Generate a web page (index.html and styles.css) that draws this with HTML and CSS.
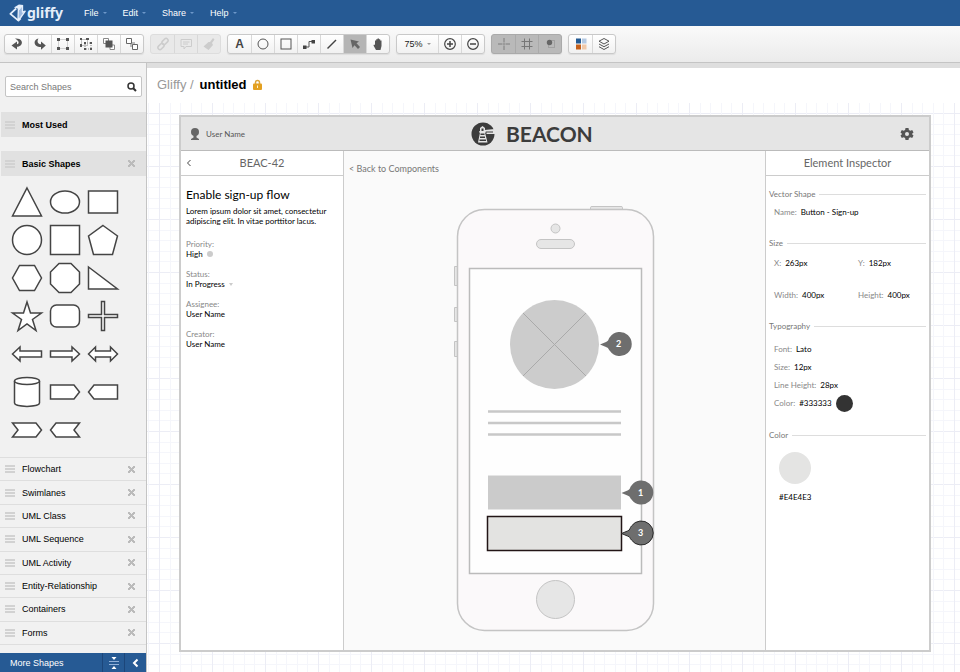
FILE: index.html
```html
<!DOCTYPE html>
<html lang="en">
<head>
    <meta charset="UTF-8">
    <meta name="viewport" content="width=device-width, initial-scale=1.0">
    <title>Gliffy / untitled</title>
    <link rel="stylesheet" href="styles.css">
</head>
<body>
    <header class="topbar">
        <a class="logo" href="#">
            <svg width="20" height="22" viewBox="0 0 20 22" fill="none" stroke="#e4eefa" stroke-width="2" stroke-linejoin="round">
                <path d="M8 6L1.5 12L10.5 19.500L13 17"/>
                <path d="M10 19L10.500 5L15 3V10L18 9L13 16Z" fill="#9dbbe0" stroke-width="1.5"/>
                <path d="M5.500 5L11 1.5L16 2L11.500 8L9.500 6Z" fill="#e4eefa" stroke="none"/>
            </svg>
            <span>gliffy</span>
        </a>
        <nav class="menu">
            <button type="button">File</button>
            <button type="button">Edit</button>
            <button type="button">Share</button>
            <button type="button">Help</button>
        </nav>
    </header>

    <div class="toolbar">
        <div class="group">
            <button type="button" aria-label="Undo"><svg viewBox="0 0 14 14"><path d="M5 1.500C11 1 13.500 5 11 8C10 9.200 8.500 9.800 7 9.800V12.500L1.500 8.500L7 4.500V7.200C9.500 7 9.500 4 5 1.500Z" fill="#555"/></svg></button>
            <button type="button" aria-label="Redo"><svg viewBox="0 0 14 14"><path d="M5.500 1.500C.5 2.500 .5 8 4.500 9.500C5.500 9.900 7 10 8 10V12.800L12.800 8.500L8 4.500V7.300C5 7.200 3.500 4.500 5.500 1.500Z" fill="#555"/></svg></button>
            <button type="button" aria-label="Group"><svg viewBox="0 0 14 14"><rect x="2.500" y="2.500" width="9" height="9" fill="none" stroke="#aaa" stroke-dasharray="1 1"/><path d="M1 1h3v3H1zM10 1h3v3h-3zM1 10h3v3H1zM10 10h3v3h-3z" fill="#555"/></svg></button>
            <button type="button" aria-label="Ungroup"><svg viewBox="0 0 14 14"><path d="M2.500 2.500h6v6h-6zM6 6h6v6H6z" fill="none" stroke="#888" stroke-dasharray="1 1"/><path d="M1 1h2v2H1zM7 1h3v2H7zM1 7h2v3H1zM11 5h2v2h-2zM5 11h2v2H5zM11 11h2v2h-2zM5 5h2v2H5z" fill="#555"/></svg></button>
            <button type="button" aria-label="Bring to front"><svg viewBox="0 0 14 14"><path d="M1.500 1.500h5v5h-5zM8 8h4.500v4.500H8z" fill="#fff" stroke="#888"/><path d="M3.500 3.500h7v7h-7z" fill="#555"/></svg></button>
            <button type="button" aria-label="Send to back"><svg viewBox="0 0 14 14"><path d="M5 5h5v5H5z" fill="#bbb"/><path d="M1.500 1.500h5v5h-5zM7.500 7.500h5v5h-5z" fill="#fff" stroke="#666"/></svg></button>
        </div>
        <div class="group disabled">
            <button type="button" aria-label="Link" disabled><svg viewBox="0 0 14 14" fill="none" stroke="#ccc" stroke-width="1.5"><rect x="5.500" y="2.500" width="7" height="4" rx="2" transform="rotate(-45 9 4.500)"/><rect x="1.500" y="7.500" width="7" height="4" rx="2" transform="rotate(-45 5 9.500)"/></svg></button>
            <button type="button" aria-label="Comment" disabled><svg viewBox="0 0 14 14" fill="none" stroke="#ccc"><path d="M2 2.500h10.500v7H7L5 12V9.500H2zM4 5h6.500M4 7h5"/></svg></button>
            <button type="button" aria-label="Format painter" disabled><svg viewBox="0 0 14 14"><path d="M11 1L12.500 2.500L10 6L11 8L6.500 13L1.500 9.500L6.500 5L8 5Z" fill="#ccc"/></svg></button>
        </div>
        <div class="group">
            <button type="button" class="letter">A</button>
            <button type="button" aria-label="Ellipse"><svg viewBox="0 0 14 14"><circle cx="7" cy="7" r="5" fill="none" stroke="#555"/></svg></button>
            <button type="button" aria-label="Rectangle"><svg viewBox="0 0 14 14"><rect x="2" y="2" width="10" height="10" fill="none" stroke="#555"/></svg></button>
            <button type="button" aria-label="Connector"><svg viewBox="0 0 14 14"><path d="M3 10H7V4.500H11" fill="none" stroke="#555"/><path d="M1 8.500h3.500v3.500H1zM9.500 3H13v3.500H9.500z" fill="#444"/></svg></button>
            <button type="button" aria-label="Line"><svg viewBox="0 0 14 14"><path d="M2.500 11.500L11 3" stroke="#444" stroke-width="1.5"/></svg></button>
            <button type="button" class="pressed" aria-label="Pointer"><svg viewBox="0 0 14 14"><path d="M2.500 2.500L11 4.500L8.500 6.300L12 10L10 12L6.500 8.300L4.500 11Z" fill="#666"/></svg></button>
            <button type="button" aria-label="Pan"><svg viewBox="0 0 14 14"><path d="M5 13L2.500 8.500L3 7.500L4 8V3.500H5.200V2.200H6.500V1.500H8V2.200H9.200V3.500H10.500V9L9.500 13Z" fill="#555"/></svg></button>
        </div>
        <div class="group">
            <button type="button" class="zoom">75%</button>
            <button type="button" aria-label="Zoom in"><svg viewBox="0 0 14 14"><path d="M4 7h6M7 4v6" stroke="#444" stroke-width="1.5"/><circle cx="7" cy="7" r="5.300" fill="none" stroke="#444" stroke-width="1.2"/></svg></button>
            <button type="button" aria-label="Zoom out"><svg viewBox="0 0 14 14"><path d="M4 7h6" stroke="#444" stroke-width="1.5"/><circle cx="7" cy="7" r="5.300" fill="none" stroke="#444" stroke-width="1.2"/></svg></button>
        </div>
        <div class="group toggled">
            <button type="button" aria-label="Guides"><svg viewBox="0 0 14 14"><path d="M1 7h4.500M8.500 7H13M7 1v4.500M7 8.500V13M6 7h2" stroke="#7c7c7c"/></svg></button>
            <button type="button" aria-label="Grid"><svg viewBox="0 0 14 14"><path d="M4.500 1.500v11M9.500 1.500v11M1.500 4.500h11M1.500 9.500h11" stroke="#777"/></svg></button>
            <button type="button" aria-label="Snap to grid"><svg viewBox="0 0 14 14"><rect x="5.500" y="3.500" width="6" height="7" fill="none" stroke="#888" stroke-dasharray="1 1"/><circle cx="6.500" cy="5.500" r="2.700" fill="#666"/></svg></button>
        </div>
        <div class="group">
            <button type="button" aria-label="Themes"><svg viewBox="0 0 14 14"><path d="M2 1.500h5v5H2z" fill="#235a93"/><path d="M8 1.500h4.500v5H8z" fill="#b4c9e2"/><path d="M2 7.500h5v5H2z" fill="#c5601b"/><path d="M8 7.500h4.500v5H8z" fill="#f0c8a8"/></svg></button>
            <button type="button" aria-label="Layers"><svg viewBox="0 0 14 14" fill="none" stroke="#555"><path d="M7 1.500L12 4.200L7 7L2 4.200ZM2 7L7 9.700L12 7M2 9.700L7 12.500L12 9.700"/></svg></button>
        </div>
    </div>

    <div class="workspace">
        <aside class="sidebar">
            <form class="search">
                <input type="text" aria-label="Search Shapes" placeholder="Search Shapes">
                <button type="submit" aria-label="Search"><svg width="10" height="10" viewBox="0 0 10 10" fill="none" stroke="#333"><circle cx="4" cy="4" r="3" stroke-width="1.5"/><path d="M6.200 6.200L9 9" stroke-width="2"/></svg></button>
            </form>
            <h2 class="section"><i class="grip"></i>Most Used</h2>
            <h2 class="section basic"><i class="grip"></i>Basic Shapes<button type="button" class="close" aria-label="Remove"></button></h2>
            <div class="shapes">
                <svg viewBox="0 0 38 38"><path d="M19 5L33.500 33H4.500Z"/></svg>
                <svg viewBox="0 0 38 38"><ellipse cx="19" cy="19" rx="14.500" ry="11"/></svg>
                <svg viewBox="0 0 38 38"><path d="M4.500 8h29v22h-29z"/></svg>
                <svg viewBox="0 0 38 38"><circle cx="19" cy="19" r="14.500"/></svg>
                <svg viewBox="0 0 38 38"><path d="M4.500 4.500h29v29h-29z"/></svg>
                <svg viewBox="0 0 38 38"><path d="M19 4.500L33.500 15L28.500 33.500H9.500L4.500 15Z"/></svg>
                <svg viewBox="0 0 38 38"><path d="M11.500 6.500h15L33.500 19L26.500 31.500H11.500L4.500 19Z"/></svg>
                <svg viewBox="0 0 38 38"><path d="M13 4.500h12L33.500 13V25L25 33.500H13L4.500 25V13Z"/></svg>
                <svg viewBox="0 0 38 38"><path d="M4.500 8L33.500 30H4.500Z"/></svg>
                <svg viewBox="0 0 38 38"><path d="M19 5L22.500 16H33.500L24.500 22.500L28 33.500L19 27L10 33.500L13.500 22.500L4.500 16H15.500Z"/></svg>
                <svg viewBox="0 0 38 38"><rect x="4.500" y="8" width="29" height="22" rx="6"/></svg>
                <svg viewBox="0 0 38 38"><path d="M17.500 4.500h3v13h13v3h-13v13h-3v-13h-13v-3h13z"/></svg>
                <svg viewBox="0 0 38 38"><path d="M4.500 19L12 12V16H33.500V22H12V26Z"/></svg>
                <svg viewBox="0 0 38 38"><path d="M33.500 19L26 12V16H4.500V22H26V26Z"/></svg>
                <svg viewBox="0 0 38 38"><path d="M4.500 19L11.500 12V16H26.500V12L33.500 19L26.500 26V22H11.500V26Z"/></svg>
                <svg viewBox="0 0 38 38"><path d="M6.500 8V30C6.500 34.500 31.500 34.500 31.500 30V8"/><ellipse cx="19" cy="8" rx="12.500" ry="3.500"/></svg>
                <svg viewBox="0 0 38 38"><path d="M4.500 12H28L33.500 19L28 26H4.500Z"/></svg>
                <svg viewBox="0 0 38 38"><path d="M33.500 12H10L4.500 19L10 26H33.500Z"/></svg>
                <svg viewBox="0 0 38 38"><path d="M4.500 12H28L33.500 19L28 26H4.500L10 19Z"/></svg>
                <svg viewBox="0 0 38 38"><path d="M33.500 12H10L4.500 19L10 26H33.500L28 19Z"/></svg>
            </div>
            <ul class="libraries">
                <li><i class="grip"></i>Flowchart<button type="button" class="close" aria-label="Remove"></button></li>
                <li><i class="grip"></i>Swimlanes<button type="button" class="close" aria-label="Remove"></button></li>
                <li><i class="grip"></i>UML Class<button type="button" class="close" aria-label="Remove"></button></li>
                <li><i class="grip"></i>UML Sequence<button type="button" class="close" aria-label="Remove"></button></li>
                <li><i class="grip"></i>UML Activity<button type="button" class="close" aria-label="Remove"></button></li>
                <li><i class="grip"></i>Entity-Relationship<button type="button" class="close" aria-label="Remove"></button></li>
                <li><i class="grip"></i>Containers<button type="button" class="close" aria-label="Remove"></button></li>
                <li><i class="grip"></i>Forms<button type="button" class="close" aria-label="Remove"></button></li>
            </ul>
            <footer class="more">
                <button type="button" class="more-label">More Shapes</button>
                <button type="button" class="more-icon" aria-label="Collapse sections"><svg width="12" height="14" viewBox="0 0 12 14"><path d="M1 5.500h10M1 8.500h10" stroke="#8fb0d8"/><path d="M3.500 1h5L6 4zM3.500 13h5L6 10z" fill="#fff"/></svg></button>
                <button type="button" class="more-icon" aria-label="Hide panel"><svg width="8" height="10" viewBox="0 0 8 10"><path d="M5.500 1.500L2 5L5.500 8.500" fill="none" stroke="#fff" stroke-width="2"/></svg></button>
            </footer>
        </aside>

        <main class="main">
            <div class="doc-title">
                <a href="#">Gliffy /</a>
                <h1>untitled</h1>
                <svg width="9" height="11" viewBox="0 0 9 11"><path d="M2.500 5V3.500C2.500 .8 6.500 .8 6.500 3.500V5" fill="none" stroke="#dca53c" stroke-width="1.5"/><rect y="4.500" width="9" height="6.500" rx="1" fill="#e3a020"/><path d="M4.500 6.500v2.500" stroke="#fff2cc"/></svg>
            </div>
            <div class="canvas">
                <div class="mock">
                    <div class="mock-head">
                        <div class="user">
                            <svg width="10" height="12" viewBox="0 0 10 12" fill="#666"><circle cx="5" cy="4" r="4"/><path d="M3.500 7h3v2.500L9 11v1H1v-1L3.500 9.500z"/></svg>
                            User Name
                        </div>
                        <div class="brand">
                            <svg width="24" height="24" viewBox="0 0 24 24">
                                <circle cx="12" cy="12" r="11.500" fill="#3c3c3c"/>
                                <path d="M13.500 8L24 7V12H15.500V10.500H22V9.500H14Z" fill="#e5e5e5"/>
                                <path d="M7 20.500L9 10.500H8V9.500L9 9V6L11.500 4L14 6V9L15 9.500V10.500H14L16.500 20.500Z" fill="#e5e5e5"/>
                                <path d="M10.500 6.500h2v2.500h-2zM9.500 11.500h4v1.500h-4zM9 14.500h5v1.500H9zM8.500 17.500h6.500v1.500H8.500z" fill="#3c3c3c"/>
                            </svg>
                            <strong>BEACON</strong>
                        </div>
                        <button type="button" class="gear" aria-label="Settings">
                            <svg width="14" height="14" viewBox="0 0 14 14"><path d="M5.500 1h3l.4 1.900 1.500.8 1.800-.6 1.300 2.300-1.400 1.300v.6l1.400 1.300-1.300 2.300-1.800-.6-1.500.8-.4 1.900h-3l-.4-1.900-1.500-.8-1.800.6L.5 8.600l1.400-1.300v-.6L.5 5.400l1.300-2.300 1.800.6 1.500-.8z" fill="#555"/><circle cx="7" cy="7" r="2" fill="#e5e5e5"/></svg>
                        </button>
                    </div>
                    <div class="mock-body">
                        <section class="issue">
                            <div class="panel-head">
                                <button type="button" class="back" aria-label="Back"><svg width="6" height="8" viewBox="0 0 6 8"><path d="M4.500 1L1.500 4L4.500 7" fill="none" stroke="#444"/></svg></button>
                                <span>BEAC-42</span>
                            </div>
                            <div class="issue-body">
                                <h2>Enable sign-up flow</h2>
                                <p>Lorem ipsum dolor sit amet, consectetur adipiscing elit. In vitae porttitor lacus.</p>
                                <dl>
                                    <div><dt>Priority:</dt><dd>High <i class="dot"></i></dd></div>
                                    <div><dt>Status:</dt><dd>In Progress <i class="caret"></i></dd></div>
                                    <div><dt>Assignee:</dt><dd>User Name</dd></div>
                                    <div><dt>Creator:</dt><dd>User Name</dd></div>
                                </dl>
                            </div>
                        </section>

                        <section class="preview">
                            <a href="#">&lt; Back to Components</a>
                            <svg class="phone" width="209" height="434" viewBox="0 0 209 434">
                                <g class="phone-part">
                                    <path d="M140.500 9V7.500Q140.500 6.500 142 6.500H171Q172.500 6.500 172.500 7.500V9"/>
                                    <path d="M7 66.500H4.500V85.500H7M7 107.500H4.500V121.500H7M7 141.500H4.500V156.500H7"/>
                                </g>
                                <rect class="phone-case" x="7.500" y="9.500" width="196" height="421" rx="27"/>
                                <g class="phone-part">
                                    <circle cx="105.500" cy="28.500" r="4.500"/>
                                    <rect x="86.500" y="39.500" width="38" height="9" rx="4.500"/>
                                    <circle cx="105.500" cy="399.500" r="19"/>
                                </g>
                                <rect class="phone-screen" x="19.500" y="68.500" width="172" height="305"/>
                                <circle cx="104.500" cy="144.500" r="44.500" fill="#ccc"/>
                                <path d="M73 113L136 176M136 113L73 176" stroke="#aaa"/>
                                <path d="M38 211.500H171M38 223H171M38 234.500H171" stroke="#c8c8c8" stroke-width="2.5"/>
                                <rect x="38" y="275.500" width="133" height="34" fill="#cbcbcb"/>
                                <rect x="37.500" y="316.500" width="134" height="34" fill="#e3e3e1" stroke="#221516" stroke-width="1.5"/>
                                <g class="marker">
                                    <path d="M150 144.500L156 142C159 141 158 139 160 137A12 12 0 1 1 160 151C158 149 159 148 156 147Z"/>
                                    <text x="168.500" y="147">2</text>
                                    <path d="M171.500 293L177.500 290.500C180.500 289.500 179.500 287.500 181.500 285.500A12 12 0 1 1 181.500 299.500C179.500 297.500 180.500 296.500 177.500 295.500Z"/>
                                    <text x="190.500" y="296">1</text>
                                    <path stroke="#2b2b2b" d="M171.500 333.500L177.500 331C180.500 330 179.500 328 181.500 326A12 12 0 1 1 181.500 340C179.500 338 180.500 337 177.500 336Z"/>
                                    <text x="190.500" y="336">3</text>
                                </g>
                            </svg>
                        </section>

                        <section class="inspector">
                            <div class="panel-head"><span>Element Inspector</span></div>
                            <div class="inspector-body">
                                <h3>Vector Shape</h3>
                                <dl class="single">
                                    <div><dt>Name:</dt><dd>Button - Sign-up</dd></div>
                                </dl>
                                <h3>Size</h3>
                                <dl class="size">
                                    <div><dt>X:</dt><dd>263px</dd></div>
                                    <div><dt>Y:</dt><dd>182px</dd></div>
                                    <div><dt>Width:</dt><dd>400px</dd></div>
                                    <div><dt>Height:</dt><dd>400px</dd></div>
                                </dl>
                                <h3>Typography</h3>
                                <dl class="type">
                                    <div><dt>Font:</dt><dd>Lato</dd></div>
                                    <div><dt>Size:</dt><dd>12px</dd></div>
                                    <div><dt>Line Height:</dt><dd>28px</dd></div>
                                    <div><dt>Color:</dt><dd>#333333</dd><dd class="ink"></dd></div>
                                </dl>
                                <h3>Color</h3>
                                <div class="swatch"><i></i>#E4E4E3</div>
                            </div>
                        </section>
                    </div>
                </div>
            </div>
        </main>
    </div>
</body>
</html>
```
FILE: styles.css
```css
* {
    box-sizing: border-box;
}

body {
    display: flex;
    flex-direction: column;
    height: 100vh;
    margin: 0;
    font-family: "Liberation Sans", Arial, sans-serif;
    font-size: 9px;
    color: #000;
    background: #fff;
    overflow: hidden;
}

button {
    padding: 0;
    border: none;
    background: none;
    font: inherit;
    color: inherit;
    cursor: pointer;
}

svg {
    display: block;
}

h1,
h2,
h3,
p,
dl,
dd,
ul {
    margin: 0;
    padding: 0;
}

a {
    color: inherit;
    text-decoration: none;
}

/* top bar */
.topbar {
    display: flex;
    align-items: center;
    gap: 21px;
    flex: none;
    height: 26px;
    padding-left: 9px;
    background: #265a94;
    color: #fff;
}

.logo {
    display: flex;
    align-items: center;
    width: 54px;
    font: bold 14px/20px "Noto Sans", sans-serif;
    color: #e4eefa;
}

.menu {
    display: flex;
    gap: 16px;
}

.menu button,
.zoom {
    display: flex;
    align-items: center;
    gap: 4px;
}

.menu button::after,
.zoom::after {
    content: "";
    border: 2px solid transparent;
    border-top-color: #6d97c9;
    border-bottom: none;
}

/* toolbar */
.toolbar {
    display: flex;
    align-items: center;
    gap: 6px;
    flex: none;
    height: 37px;
    padding-left: 4px;
    background: linear-gradient(#fafafa, #ebebeb);
    border-bottom: 1px solid #c4c4c4;
}

.group {
    display: flex;
    height: 20px;
    border: 1px solid #c9c9c9;
    border-radius: 3px;
    background: linear-gradient(#fff, #f1f1f1);
    box-shadow: 0 1px 1px #ddd;
}

.group button {
    display: flex;
    align-items: center;
    justify-content: center;
    width: 23px;
}

.group button + button {
    border-left: 1px solid #d8d8d8;
}

.group svg {
    width: 14px;
    height: 14px;
}

.group.disabled {
    background: #e9e9e9;
    border-color: #ddd;
    box-shadow: none;
}

.group.toggled {
    background: #b9b9b9;
    border-color: #aaa;
}

.group.toggled button + button {
    border-color: #aaa;
}

.group .pressed {
    background: #b5b5b5;
}

.letter {
    font-size: 12px;
    font-weight: bold;
    color: #444;
}

.group .zoom {
    width: 41px;
    color: #222;
}

.zoom::after {
    border-top-color: #999;
}

/* sidebar */
.workspace {
    display: flex;
    flex: 1;
    min-height: 0;
}

.sidebar {
    display: flex;
    flex-direction: column;
    flex: none;
    width: 147px;
    background: #f1f1f1;
    border-right: 1px solid #c4c4c4;
}

.search {
    display: flex;
    align-items: center;
    height: 21px;
    margin: 13px 4px 15px 5px;
    border: 1px solid #c4c4c4;
    border-radius: 2px;
    background: #fff;
}

.search input {
    flex: 1;
    min-width: 0;
    padding: 0 4px;
    border: none;
    outline: none;
    background: none;
    font: inherit;
}

.search input::placeholder {
    color: #777;
}

.search button {
    padding: 0 4px;
}

.section,
.libraries li {
    display: flex;
    align-items: center;
    padding: 0 11px 0 5px;
}

.section {
    height: 25px;
    margin-left: 1px;
    padding-left: 4px;
    background: #e1e1e1;
    font-size: 9px;
}

.section.basic {
    margin-top: 14px;
}

.grip {
    width: 10px;
    height: 8px;
    margin-right: 7px;
    background: repeating-linear-gradient(#d2d2d2 0 2px, transparent 2px 3px);
}

.close {
    width: 7px;
    height: 7px;
    margin-left: auto;
    background:
        linear-gradient(45deg, transparent 42%, #bbb 42% 58%, transparent 58%),
        linear-gradient(-45deg, transparent 42%, #bbb 42% 58%, transparent 58%);
}

.shapes {
    display: grid;
    grid-template-columns: repeat(3, 38px);
    padding: 7px 8px 8px;
}

.shapes svg {
    fill: #fff;
    stroke: #444;
    stroke-width: 1.5;
}

.libraries {
    display: flex;
    flex-direction: column;
    flex: 1;
    padding-bottom: 8px;
    list-style: none;
}

.libraries li {
    flex: 1;
    border-top: 1px solid #dedede;
}

.libraries li:last-child {
    border-bottom: 1px solid #dedede;
}

.more {
    display: flex;
    height: 19px;
    background: #265a94;
    color: #fff;
}

.more-label {
    flex: 1;
    padding-left: 10px;
    text-align: left;
}

.more-icon {
    display: flex;
    align-items: center;
    justify-content: center;
    width: 22px;
    border-left: 1px solid #1c467a;
}

/* document */
.main {
    display: flex;
    flex-direction: column;
    flex: 1;
    border-top: 5px solid #dedede;
}

.doc-title {
    display: flex;
    align-items: center;
    gap: 6px;
    height: 35px;
    padding: 0 0 2px 10px;
    font-size: 13px;
    color: #999;
}

.doc-title h1 {
    font-size: 13px;
    color: #000;
}

.canvas {
    display: flex;
    flex: 1;
    padding: 12px 29px 20px 32px;
    background:
        linear-gradient(90deg, #ecedf5 1px, transparent 1px 11px, #f5f6fb 11px 12px, transparent 12px 21px, #f5f6fb 21px 22px, transparent 22px 32px, #f5f6fb 32px 33px, transparent 33px 42px, #f5f6fb 42px 43px, transparent 43px) 12px 0 / 53px 53px,
        linear-gradient(#ecedf5 1px, transparent 1px 11px, #f5f6fb 11px 12px, transparent 12px 21px, #f5f6fb 21px 22px, transparent 22px 32px, #f5f6fb 32px 33px, transparent 33px 42px, #f5f6fb 42px 43px, transparent 43px) 0 10px / 53px 53px;
}

.mock {
    display: flex;
    flex-direction: column;
    flex: 1;
    border: 2px solid #ccc;
    background: #fff;
    font-family: Lato, sans-serif;
    font-size: 8px;
    line-height: 10px;
}

.mock-head {
    display: grid;
    grid-template-columns: 7fr auto 8fr;
    align-items: center;
    height: 34px;
    padding: 0 15px 0 9px;
    border-bottom: 1px solid #bbb;
    background: #e5e5e5;
}

.user {
    display: flex;
    align-items: center;
    gap: 6px;
    color: #555;
}

.brand {
    display: flex;
    align-items: center;
    gap: 11px;
    font-size: 21px;
    line-height: 24px;
    color: #3c3c3c;
}

.gear {
    justify-self: end;
}

.mock-body {
    display: flex;
    flex: 1;
}

.panel-head {
    display: grid;
    grid-template-columns: 14px 1fr 14px;
    align-items: center;
    height: 25px;
    border-bottom: 1px solid #ccc;
    font-size: 11px;
    color: #666;
}

.panel-head span {
    grid-column: 2;
    text-align: center;
}

.issue {
    width: 163px;
    border-right: 1px solid #ccc;
}

.back {
    padding-left: 5px;
}

.issue-body {
    padding: 12px 5px;
}

.issue h2 {
    margin-bottom: 4px;
    font-size: 12px;
    line-height: 14px;
    font-weight: normal;
}

.issue dl {
    display: grid;
    gap: 10px;
    margin-top: 13px;
}

dt {
    color: #888;
}

dd {
    color: #000;
}

.issue dd {
    display: flex;
    align-items: center;
    gap: 4px;
}

.dot {
    width: 6px;
    height: 6px;
    border-radius: 50%;
    background: #ccc;
}

.caret {
    border: 2px solid transparent;
    border-top: 3px solid #ccc;
    border-bottom: none;
}

.preview {
    flex: 1;
    padding: 12px 5px 0;
    background: #fafafa;
    color: #777;
}

.preview a {
    display: block;
    font-size: 9px;
    line-height: 12px;
}

.phone {
    margin: 25px auto 0;
}

.phone-case {
    fill: #fbf9fa;
    stroke: #c4c4c4;
    stroke-width: 1.5;
}

.phone-part {
    fill: #e6e6e6;
    stroke: #c4c4c4;
}

.phone-screen {
    fill: #fefefe;
    stroke: #bbb;
    stroke-width: 1.5;
}

.marker {
    fill: #6e6e6e;
}

.marker text {
    fill: #fff;
    font-size: 9px;
    font-weight: bold;
    text-anchor: middle;
}

.inspector {
    width: 164px;
    border-left: 1px solid #ccc;
}

.inspector-body {
    padding: 13px 3px;
}

.inspector h3 {
    display: flex;
    align-items: center;
    gap: 4px;
    font-size: 8px;
    line-height: 10px;
    font-weight: normal;
    color: #777;
}

.inspector h3::after {
    content: "";
    flex: 1;
    border-top: 1px solid #ddd;
}

.inspector dl {
    display: grid;
    padding-left: 5px;
}

.inspector dl div {
    display: flex;
    align-items: center;
    gap: 4px;
    height: 10px;
}

.single {
    margin: 8px 0 21px;
}

.size {
    grid-template-columns: 84px 1fr;
    row-gap: 22px;
    margin: 10px 0 21px;
}

.type {
    row-gap: 8px;
    margin: 13px 0 22px;
}

.ink {
    width: 17px;
    height: 17px;
    border-radius: 50%;
    background: #333;
}

.swatch {
    display: inline-flex;
    flex-direction: column;
    align-items: center;
    gap: 8px;
    margin: 12px 0 0 10px;
    color: #000;
}

.swatch i {
    width: 32px;
    height: 32px;
    border-radius: 50%;
    background: #e4e4e3;
}
```
